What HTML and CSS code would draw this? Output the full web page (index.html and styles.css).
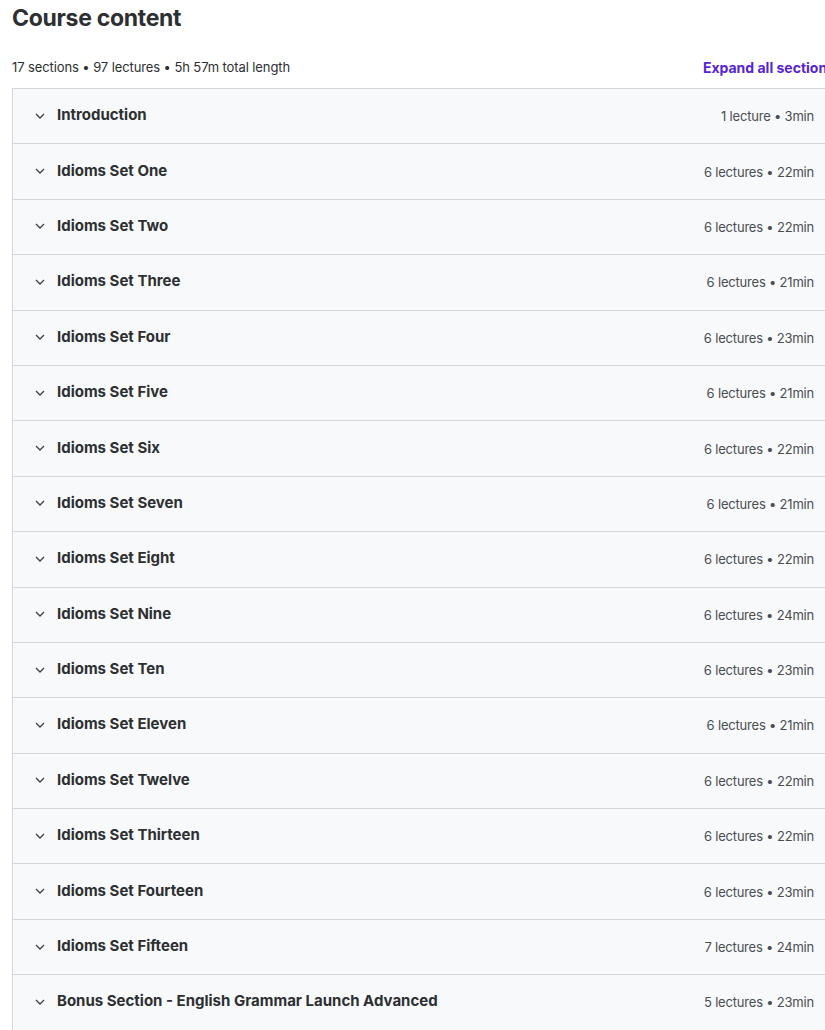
FILE: index.html
```html
<!DOCTYPE html>
<html>
<head>
<meta charset="utf-8">
<link rel="stylesheet" href="styles.css">
</head>
<body>
<div class="page">
  <h2 class="title">Course content</h2>
  <div class="meta-bar">
    <span class="summary">17 sections • 97 lectures • 5h 57m total length</span>
    <button class="expand">Expand all sections</button>
  </div>
  <div class="sections">
    <div class="row"><span class="chev"><svg viewBox="0 0 10 6"><path d="M1 1l4 4 4-4"/></svg></span><span class="name">Introduction</span><span class="info">1 lecture • 3min</span></div>
    <div class="row"><span class="chev"><svg viewBox="0 0 10 6"><path d="M1 1l4 4 4-4"/></svg></span><span class="name">Idioms Set One</span><span class="info">6 lectures • 22min</span></div>
    <div class="row"><span class="chev"><svg viewBox="0 0 10 6"><path d="M1 1l4 4 4-4"/></svg></span><span class="name">Idioms Set Two</span><span class="info">6 lectures • 22min</span></div>
    <div class="row"><span class="chev"><svg viewBox="0 0 10 6"><path d="M1 1l4 4 4-4"/></svg></span><span class="name">Idioms Set Three</span><span class="info">6 lectures • 21min</span></div>
    <div class="row"><span class="chev"><svg viewBox="0 0 10 6"><path d="M1 1l4 4 4-4"/></svg></span><span class="name">Idioms Set Four</span><span class="info">6 lectures • 23min</span></div>
    <div class="row"><span class="chev"><svg viewBox="0 0 10 6"><path d="M1 1l4 4 4-4"/></svg></span><span class="name">Idioms Set Five</span><span class="info">6 lectures • 21min</span></div>
    <div class="row"><span class="chev"><svg viewBox="0 0 10 6"><path d="M1 1l4 4 4-4"/></svg></span><span class="name">Idioms Set Six</span><span class="info">6 lectures • 22min</span></div>
    <div class="row"><span class="chev"><svg viewBox="0 0 10 6"><path d="M1 1l4 4 4-4"/></svg></span><span class="name">Idioms Set Seven</span><span class="info">6 lectures • 21min</span></div>
    <div class="row"><span class="chev"><svg viewBox="0 0 10 6"><path d="M1 1l4 4 4-4"/></svg></span><span class="name">Idioms Set Eight</span><span class="info">6 lectures • 22min</span></div>
    <div class="row"><span class="chev"><svg viewBox="0 0 10 6"><path d="M1 1l4 4 4-4"/></svg></span><span class="name">Idioms Set Nine</span><span class="info">6 lectures • 24min</span></div>
    <div class="row"><span class="chev"><svg viewBox="0 0 10 6"><path d="M1 1l4 4 4-4"/></svg></span><span class="name">Idioms Set Ten</span><span class="info">6 lectures • 23min</span></div>
    <div class="row"><span class="chev"><svg viewBox="0 0 10 6"><path d="M1 1l4 4 4-4"/></svg></span><span class="name">Idioms Set Eleven</span><span class="info">6 lectures • 21min</span></div>
    <div class="row"><span class="chev"><svg viewBox="0 0 10 6"><path d="M1 1l4 4 4-4"/></svg></span><span class="name">Idioms Set Twelve</span><span class="info">6 lectures • 22min</span></div>
    <div class="row"><span class="chev"><svg viewBox="0 0 10 6"><path d="M1 1l4 4 4-4"/></svg></span><span class="name">Idioms Set Thirteen</span><span class="info">6 lectures • 22min</span></div>
    <div class="row"><span class="chev"><svg viewBox="0 0 10 6"><path d="M1 1l4 4 4-4"/></svg></span><span class="name">Idioms Set Fourteen</span><span class="info">6 lectures • 23min</span></div>
    <div class="row"><span class="chev"><svg viewBox="0 0 10 6"><path d="M1 1l4 4 4-4"/></svg></span><span class="name">Idioms Set Fifteen</span><span class="info">7 lectures • 24min</span></div>
    <div class="row"><span class="chev"><svg viewBox="0 0 10 6"><path d="M1 1l4 4 4-4"/></svg></span><span class="name">Bonus Section - English Grammar Launch Advanced</span><span class="info">5 lectures • 23min</span></div>
  </div>
</div>
</body>
</html>
```

FILE: styles.css
```css
html, body {
  margin: 0;
  padding: 0;
  overflow: hidden;
  background: #ffffff;
}
body {
  font-family: Inter, "Noto Sans", sans-serif;
  color: #2d2f31;
}
.page {
  width: 823px;
  padding-left: 12px;
}
.title {
  margin: 0;
  padding-top: 4px;
  font-size: 23px;
  line-height: 28px;
  font-weight: 700;
  letter-spacing: -0.3px;
}
.meta-bar {
  display: flex;
  justify-content: space-between;
  align-items: center;
  height: 56px;
}
.summary {
  font-size: 13px;
  letter-spacing: -0.1px;
  color: #2d2f31;
  padding-top: 14px;
}
.expand {
  border: 0;
  background: none;
  padding: 14px 0 0;
  font-family: inherit;
  font-size: 14px;
  font-weight: 700;
  color: #5624d0;
}
.sections {
  border: 1px solid #d1d7dc;
  border-bottom: 0;
}
.row {
  display: flex;
  align-items: center;
  background: #f7f9fa;
  border-bottom: 1px solid #d1d7dc;
  height: 54.4px;
  box-sizing: content-box;
  padding: 0 20px 0 22px;
}
.chev {
  width: 10px;
  height: 6px;
  margin-right: 12px;
  display: flex;
  margin-top: -1px;
}
.chev svg {
  width: 10px;
  height: 6px;
  fill: none;
  stroke: #3e4143;
  stroke-width: 1.3;
}
.name {
  flex: 1;
  font-size: 15px;
  font-weight: 700;
  margin-top: -3px;
}
.info {
  font-size: 13px;
  letter-spacing: -0.2px;
  color: #4a4e52;
}
```
